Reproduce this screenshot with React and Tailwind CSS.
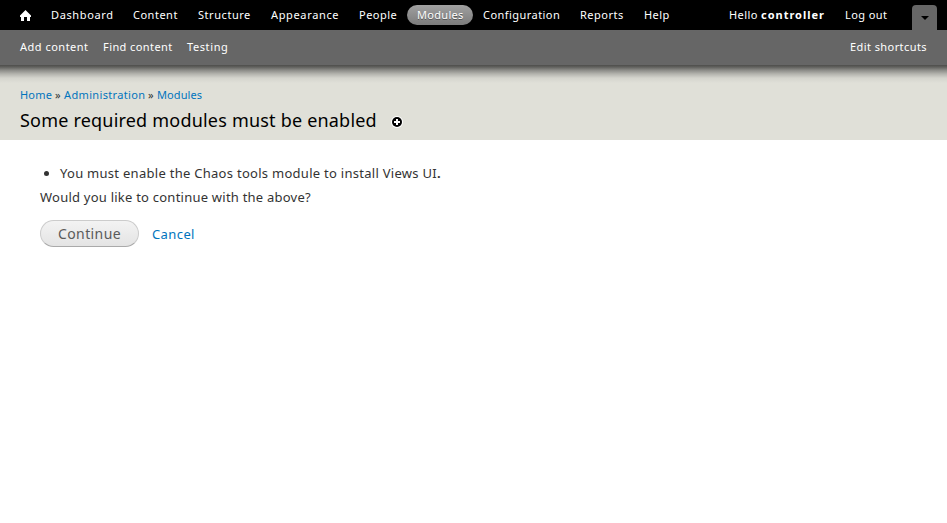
const menu = [
  { label: 'Dashboard', box: 'w-[62px] tracking-[0.62px]' },
  { label: 'Content', box: 'w-[45px] tracking-[0.5px]' },
  { label: 'Structure', box: 'w-[53px] tracking-[0.55px]' },
  { label: 'Appearance', box: 'w-[68px] tracking-[0.65px]' },
  { label: 'People', box: 'w-[38px] tracking-[0.5px]' },
  { label: 'Modules', box: 'w-[46px] tracking-[0.3px]', active: true },
  { label: 'Configuration', box: 'w-[77px] tracking-[0.45px]' },
  { label: 'Reports', box: 'w-[44px] tracking-[0.5px]' },
  { label: 'Help', box: 'w-[25px] tracking-[0.4px]' },
];

function HomeIcon() {
  return (
    <svg className="ml-5 mr-[10px] h-[11px] w-[11px] shrink-0" viewBox="0 0 11 11" fill="#fff">
      <path d="M5.5 0 11 5.5V7H10V11H7V7H4V11H1V7H0V5.5Z" />
    </svg>
  );
}

function Toolbar() {
  return (
    <nav className="flex h-[30px] items-center bg-black text-[11px] leading-5 text-white">
      <HomeIcon />
      {menu.map(({ label, box, active }) => (
        <a
          key={label}
          className={
            active
              ? 'h-5 rounded-[10px] bg-linear-to-b from-[#a0a0a0] to-[#7c7c7c] px-[10px] [text-shadow:0_1px_0_#555]'
              : 'h-5 px-[10px]'
          }
        >
          <span className={`block whitespace-nowrap ${box}`}>{label}</span>
        </a>
      ))}
      <span className="ml-auto mr-[19px] w-[97px] whitespace-nowrap tracking-[0.4px]">
        Hello <b className="tracking-[1px]">controller</b>
      </span>
      <a className="mr-[25px] w-[42px] whitespace-nowrap tracking-[0.4px]">Log out</a>
      <button className="mr-[10px] flex h-[25px] w-[25px] items-center justify-center self-end rounded-t-[4px] bg-[#666]">
        <svg className="h-1 w-2" viewBox="0 0 8 4" fill="#000">
          <path d="M0 0H8L4 4Z" />
        </svg>
      </button>
    </nav>
  );
}

function Shortcuts() {
  return (
    <div className="flex h-[35px] bg-[#666] pl-5 pr-5 pt-[7px] text-[11px] leading-5 text-white">
      <a className="mr-[14px] w-[69px] whitespace-nowrap tracking-[0.5px]">Add content</a>
      <a className="mr-[15px] w-[69px] whitespace-nowrap tracking-[0.42px]">Find content</a>
      <a className="w-[42px] whitespace-nowrap tracking-[0.6px]">Testing</a>
      <a className="ml-auto w-[77px] whitespace-nowrap tracking-[0.42px]">Edit shortcuts</a>
    </div>
  );
}

function PageHeader() {
  return (
    <header className="h-[75px] bg-[#e0e0d8] bg-[linear-gradient(to_bottom,#4d4d4b_0,#60605d_2px,#898985_5px,#b4b4ae_9px,#d4d4cd_13px,#e0e0d8_18px)] bg-no-repeat px-5 pt-5">
      <div className="flex h-5 text-[11px] leading-5 text-[#0074bd]">
        <a className="w-[35px] whitespace-nowrap tracking-[0.2px]">Home</a>
        <span className="w-[9px] text-[#333]">»</span>
        <a className="w-[84px] whitespace-nowrap tracking-[0.35px]">Administration</a>
        <span className="w-[9px] text-[#333]">»</span>
        <a className="whitespace-nowrap tracking-[0.1px]">Modules</a>
      </div>
      <div className="flex h-[30px] items-center text-black">
        <h1 className="w-[371px] whitespace-nowrap text-[18px] leading-[30px] tracking-[0.2px]">
          Some required modules must be enabled
        </h1>
        <svg className="mt-[3px] h-3 w-3" viewBox="0 0 12 12">
          <circle cx="6" cy="6" r="6" fill="#fff" />
          <circle cx="6" cy="6" r="5" fill="#000" />
          <path d="M5 3H7V5H9V7H7V9H5V7H3V5H5Z" fill="#fff" />
        </svg>
      </div>
    </header>
  );
}

export default function App() {
  return (
    <div className="h-[523px] w-[947px] overflow-hidden bg-white font-['Noto_Sans',sans-serif]">
      <Toolbar />
      <Shortcuts />
      <PageHeader />
      <main className="px-10 pt-[21px] text-[13px] leading-6 text-[#333]">
        <ul>
          <li className="flex items-center whitespace-nowrap tracking-[0.28px]">
            <span className="ml-1 mr-[11px] mt-px h-[5px] w-[5px] rounded-full bg-[#333]" />
            <span>
              You must enable the Chaos tools module to install Views UI<b>.</b>
            </span>
          </li>
        </ul>
        <p className="whitespace-nowrap tracking-[0.23px]">Would you like to continue with the above?</p>
        <div className="mt-[11px] flex items-center">
          <button className="h-[27px] w-[99px] rounded-[14px] border border-[#ccc] border-b-[#aaa] bg-linear-to-b from-[#f3f3f3] to-[#e4e4e4] text-[14px] tracking-[0.4px] text-[#5a5a5a]">
            Continue
          </button>
          <a className="ml-[13px] tracking-[0.4px] text-[#0074bd]">Cancel</a>
        </div>
      </main>
    </div>
  );
}
